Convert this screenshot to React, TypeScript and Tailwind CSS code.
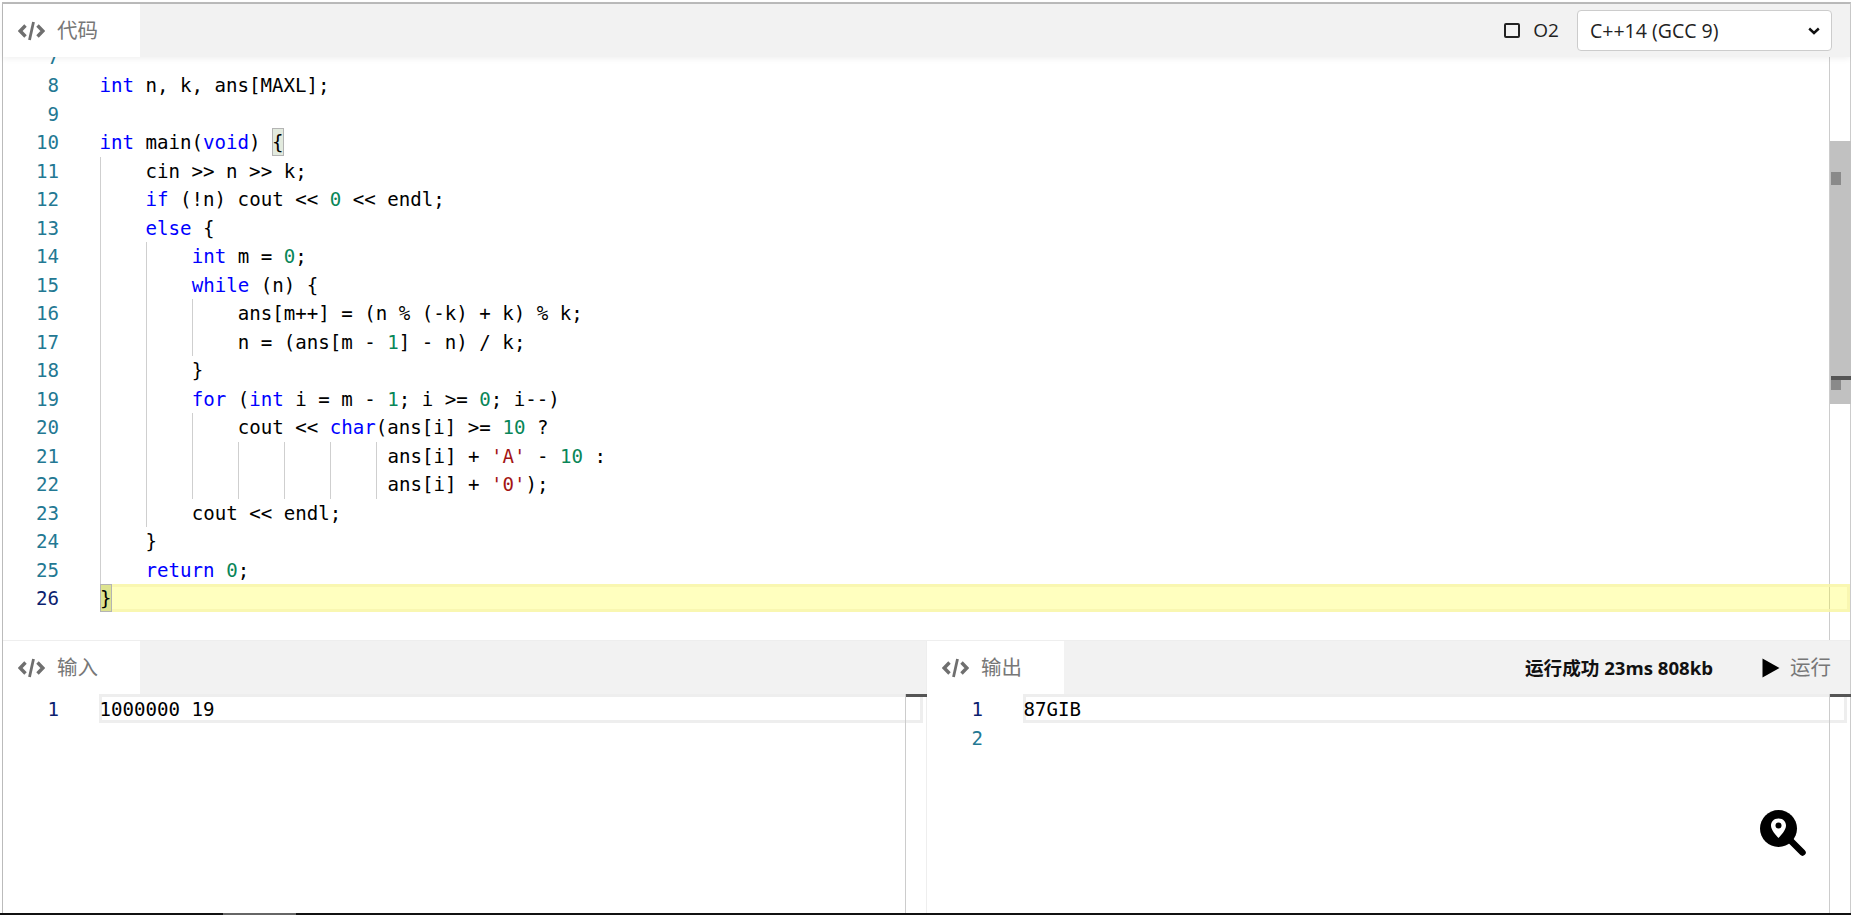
import type { ReactNode } from "react";

const kw = "text-[#0000ff]";
const num = "text-[#098658]";
const str = "text-[#a31515]";

type Tok = string | [string, string];

// guides = indent cells drawn with a left rule, the last one of lines 21/22 is a single char wide
const codeLines: { n: number; guides: number; tail?: boolean; toks: Tok[] }[] = [
  { n: 7, guides: 0, toks: [""] },
  { n: 8, guides: 0, toks: [["int", kw], " n, k, ans[MAXL];"] },
  { n: 9, guides: 0, toks: [""] },
  { n: 10, guides: 0, toks: [["int", kw], " main(", ["void", kw], ") ", ["{", "match"]] },
  { n: 11, guides: 1, toks: ["cin >> n >> k;"] },
  { n: 12, guides: 1, toks: [["if", kw], " (!n) cout << ", ["0", num], " << endl;"] },
  { n: 13, guides: 1, toks: [["else", kw], " {"] },
  { n: 14, guides: 2, toks: [["int", kw], " m = ", ["0", num], ";"] },
  { n: 15, guides: 2, toks: [["while", kw], " (n) {"] },
  { n: 16, guides: 3, toks: ["ans[m++] = (n % (-k) + k) % k;"] },
  { n: 17, guides: 3, toks: ["n = (ans[m - ", ["1", num], "] - n) / k;"] },
  { n: 18, guides: 2, toks: ["}"] },
  { n: 19, guides: 2, toks: [["for", kw], " (", ["int", kw], " i = m - ", ["1", num], "; i >= ", ["0", num], "; i--)"] },
  { n: 20, guides: 3, toks: ["cout << ", ["char", kw], "(ans[i] >= ", ["10", num], " ?"] },
  { n: 21, guides: 6, tail: true, toks: ["ans[i] + ", ["'A'", str], " - ", ["10", num], " :"] },
  { n: 22, guides: 6, tail: true, toks: ["ans[i] + ", ["'0'", str], ");"] },
  { n: 23, guides: 2, toks: ["cout << endl;"] },
  { n: 24, guides: 1, toks: ["}"] },
  { n: 25, guides: 1, toks: [["return", kw], " ", ["0", num], ";"] },
];

const Tokens = ({ toks }: { toks: Tok[] }) => (
  <>
    {toks.map((t, i) => {
      if (typeof t === "string") return <span key={i}>{t}</span>;
      if (t[1] === "match")
        return (
          <span key={i} className="inline-block h-[27.5px] bg-[#e2eade] outline outline-1 -outline-offset-1 outline-[#b4b4b4]">
            {t[0]}
          </span>
        );
      return <span key={i} className={t[1]}>{t[0]}</span>;
    })}
  </>
);

const CodeIcon = () => (
  <svg width="27" height="20" viewBox="0 0 27 20" fill="none" className="shrink-0">
    <path d="M7.5 4.5 L2.2 10 L7.5 15.5" stroke="#6f6f6f" strokeWidth="3.4" />
    <path d="M19.5 4.5 L24.8 10 L19.5 15.5" stroke="#6f6f6f" strokeWidth="3.4" />
    <path d="M15.5 1 L11.5 19" stroke="#6f6f6f" strokeWidth="2.8" />
  </svg>
);

const Tab = ({ label }: { label: string }) => (
  <div className="flex h-full w-[137px] items-center gap-[12px] bg-white pl-[15px] text-[20.5px] text-[#777]">
    <CodeIcon />
    <span>{label}</span>
  </div>
);

const Gutter = ({ n, active }: { n: number; active?: boolean }) => (
  <div className={`w-[97px] shrink-0 pr-[41px] text-right ${active ? "text-[#0b216f]" : "text-[#237893]"}`}>{n}</div>
);

const EditorRow = ({ n, active, children }: { n: number; active?: boolean; children?: ReactNode }) => (
  <div className="flex h-[28.5px] leading-[29.5px] whitespace-pre">
    <Gutter n={n} active={active} />
    <div className="relative h-full min-w-0 flex-1">{children}</div>
  </div>
);

const Pane = ({ rows, width, children }: { rows: string[]; width: string; children: ReactNode }) => (
  <div className={`flex min-w-0 flex-col ${width}`}>
    <div className="flex h-[53px] shrink-0 items-center bg-[#f2f2f2]">{children}</div>
    <div className="relative flex min-h-0 flex-1">
      <div className="min-w-0 flex-1 pt-[1.2px] font-['DejaVu_Sans_Mono',monospace] text-[19.13px]">
        {rows.map((r, i) => (
          <EditorRow key={i} n={i + 1} active={i === 0}>
            {/* current line box runs across the scrollbar column */}
            {i === 0 && (
              <div className="absolute -top-[1.2px] -left-px -right-[18px] h-[29px] border-[3px] border-[#eeeeee]" />
            )}
            <span className="relative -ml-[0.5px]">{r}</span>
          </EditorRow>
        ))}
      </div>
      <div className="relative z-10 w-[21px] shrink-0 border-l border-[#cccccc]">
        <div className="h-[3px] w-[21px] bg-[#555555]" />
      </div>
    </div>
  </div>
);

const MapSearch = () => (
  <svg width="46" height="46" viewBox="0 0 46 46" className="absolute left-[1760px] top-[810px]">
    <path d="M29 29 L42.5 42.5" stroke="#000" strokeWidth="6.5" strokeLinecap="round" />
    <circle cx="18.5" cy="18.5" r="18.5" fill="#000" />
    <path d="M18.5 8.5 C13.5 8.5 11 12 11 15.5 C11 20 15.5 24.5 18.5 28 C21.5 24.5 26 20 26 15.5 C26 12 23.5 8.5 18.5 8.5 Z" fill="#fff" />
    <circle cx="18.5" cy="15.5" r="3" fill="#000" />
  </svg>
);

export default function App() {
  return (
    <div className="relative flex h-[915px] w-[1851px] flex-col overflow-hidden bg-white pl-[2px] pt-[2px] font-['Open_Sans','Noto_Sans_CJK_SC',sans-serif] text-black">
      <div className="flex min-h-0 flex-1 flex-col border-t-2 border-r border-l border-t-[#bbbbbb] border-r-[#cccccc] border-l-[#bbbbbb]">
        {/* code editor */}
        <div className="flex h-[637px] shrink-0 flex-col border-b border-[#eeeeee]">
          <div className="relative z-10 flex h-[53px] shrink-0 items-center bg-[#f2f2f2] shadow-[0_2px_6px_rgba(0,0,0,0.06)]">
            <Tab label="代码" />
            <div className="ml-auto flex items-center pr-[18px]">
              <div className="h-[15px] w-[16px] rounded-[2px] border-2 border-[#222]" />
              <span className="ml-[13px] text-[19px] text-[#222]">O2</span>
              <div className="ml-[18px] flex h-[41px] w-[255px] items-center justify-between rounded-[4px] border border-[#cccccc] bg-white pl-[12px] pr-[11px] text-[19.5px] text-[#222]">
                <span>C++14 (GCC 9)</span>
                <svg width="12" height="8" viewBox="0 0 12 8" fill="none">
                  <path d="M1.2 1.5 L6 6 L10.8 1.5" stroke="#111" strokeWidth="2.4" />
                </svg>
              </div>
            </div>
          </div>
          <div className="flex min-h-0 flex-1">
            <div className="min-w-0 flex-1 overflow-hidden font-['DejaVu_Sans_Mono',monospace] text-[19.13px]">
              <div className="-mt-[14.5px]">
                {codeLines.map((l) => (
                  <EditorRow key={l.n} n={l.n}>
                    <div className="flex h-full">
                      {Array.from({ length: l.guides }).map((_, i) => (
                        <div key={i} className="h-full w-[46.08px] shrink-0 border-l border-[#cfcfcf]" />
                      ))}
                      {l.tail && <div className="h-full w-[11.52px] shrink-0 border-l border-[#cfcfcf]" />}
                      <div className="-ml-[0.5px]"><Tokens toks={l.toks} /></div>
                    </div>
                  </EditorRow>
                ))}
              </div>
            </div>
            <div className="relative w-[21px] shrink-0 border-l border-[#cccccc]">
              <div className="relative mt-[84px] h-[263px] w-[21px] bg-[#c1c1c1]">
                <div className="absolute left-[1px] top-[31px] h-[13px] w-[10px] bg-[#8a8a8a]" />
                <div className="absolute left-[1px] top-[235px] h-[14px] w-[10px] bg-[#8a8a8a]" />
                <div className="absolute left-[1px] top-[235px] h-[4px] w-[20px] bg-[#555555]" />
              </div>
            </div>
          </div>
          {/* last line is painted over the scrollbar column */}
          <div className="absolute left-[3px] top-[584px] flex h-[28px] w-[1847px] font-['DejaVu_Sans_Mono',monospace] text-[19.13px] leading-[29.5px]">
            <Gutter n={26} active />
            <div className="relative flex-1 border-y-[3px] border-r-[3px] border-[#f8f5ae]/80 bg-[#ffff00]/25">
              <span className="absolute -top-[3px] left-0 h-[28px] bg-[#dde38f] outline outline-1 -outline-offset-1 outline-[#b4b4b4]">{"}"}</span>
            </div>
          </div>
        </div>
        {/* input / output */}
        <div className="flex min-h-0 flex-1">
          <Pane rows={["1000000 19"]} width="w-[923px]">
            <Tab label="输入" />
          </Pane>
          <div className="w-px shrink-0 bg-[#eeeeee]" />
          <Pane rows={["87GIB", ""]} width="min-w-0 flex-1">
            <Tab label="输出" />
            <span className="ml-auto text-[18.6px] font-bold text-[#111]">运行成功 23ms 808kb</span>
            <div className="ml-[49px] mr-[19px] flex items-center gap-[10px] text-[20.5px] text-[#777]">
              <svg width="18" height="20" viewBox="0 0 18 20">
                <path d="M0.5 0.5 L17.5 10 L0.5 19.5 Z" fill="#000" />
              </svg>
              <span>运行</span>
            </div>
          </Pane>
        </div>
      </div>
      <div className="-ml-[2px] h-[2px] shrink-0 bg-[#111]">
        <div className="ml-[223px] h-full w-[73px] bg-[#666]" />
      </div>
      <MapSearch />
    </div>
  );
}
